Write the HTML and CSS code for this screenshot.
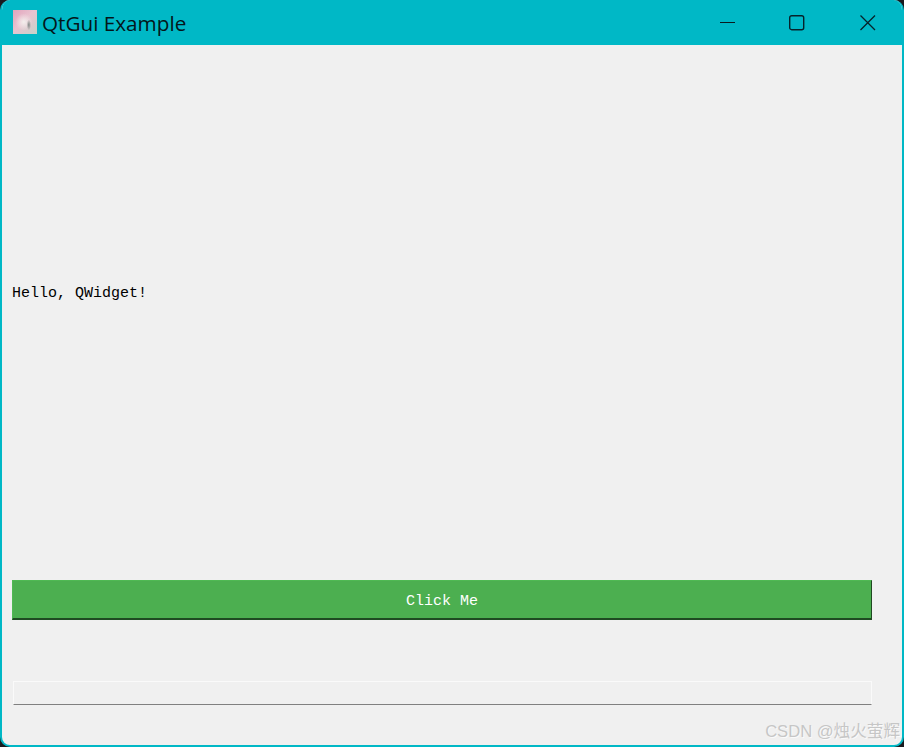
FILE: index.html
```html
<!DOCTYPE html>
<html lang="en">

<head>
  <meta charset="UTF-8">
  <meta name="viewport" content="width=device-width, initial-scale=1.0">
  <title>QtGui Example</title>
  <link rel="stylesheet" href="styles.css">
</head>

<body>
  <div class="window">
    <div class="titlebar">
      <div class="app-icon"></div>
      <span class="title">QtGui Example</span>
      <div class="controls">
        <svg class="ctl ctl-min" width="16" height="16" viewBox="0 0 16 16">
          <path d="M0 7.5H15" stroke="#0a1a1e" stroke-width="1" fill="none" />
        </svg>
        <svg class="ctl ctl-max" width="16" height="16" viewBox="0 0 16 16">
          <rect x="0.7" y="0.7" width="14" height="14" rx="2" stroke="#06222a" stroke-width="1.4" fill="none" />
        </svg>
        <svg class="ctl ctl-close" width="16" height="16" viewBox="0 0 16 16">
          <path d="M0.5 0.5L15 15M15 0.5L0.5 15" stroke="#06222a" stroke-width="1.3" fill="none" />
        </svg>
      </div>
    </div>

    <div class="content">
      <div class="label-area">
        <span class="hello">Hello, QWidget!</span>
      </div>
      <button class="click-btn">Click Me</button>
      <div class="progress"></div>
    </div>

    <div class="watermark">CSDN @烛火萤辉</div>
  </div>
</body>

</html>
```

FILE: styles.css
```css
html,
body {
  margin: 0;
  height: 100%;
  background-color: #1a1a1e;
}

.window {
  position: relative;
  box-sizing: border-box;
  width: 904px;
  height: 747px;
  display: flex;
  flex-direction: column;
  background-color: #f0f0f0;
  border: 2px solid #00b8c6;
  border-top: none;
  border-radius: 10px;
  overflow: hidden;
}

.titlebar {
  height: 45px;
  flex: none;
  display: flex;
  align-items: center;
  background-color: #00b8c6;
  padding-left: 11px;
}

.app-icon {
  width: 24px;
  height: 24px;
  margin-top: -2px;
  background:
    radial-gradient(ellipse 9% 22% at 66% 62%, #7f8583 0, rgba(127, 133, 131, 0) 100%),
    radial-gradient(circle at 45% 50%, #f3efed 0, rgba(243, 239, 237, 0) 48%),
    linear-gradient(135deg, #e2a3bc 0%, #e9c3d0 45%, #c6d3c9 100%);
}

.title {
  margin-left: 5px;
  font-family: "Open Sans", sans-serif;
  font-size: 20.7px;
  color: #04161a;
}

.controls {
  margin-left: auto;
  display: flex;
  align-items: center;
  padding-right: 26px;
}

.ctl-max {
  margin-left: 53px;
}

.ctl-close {
  margin-left: 55px;
}

.content {
  flex: 1;
  display: flex;
  flex-direction: column;
  padding: 0 30px 40px 10px;
}

.label-area {
  flex: 1;
  display: flex;
  align-items: center;
  padding-top: 2px;
  margin-bottom: 40px;
}

.hello {
  font-family: "Liberation Mono", monospace;
  font-size: 15px;
  color: #000;
}

.click-btn {
  box-sizing: border-box;
  height: 40px;
  width: 100%;
  padding: 3px 0 0;
  background-color: #4caf50;
  color: #fff;
  font-family: "Liberation Mono", monospace;
  font-size: 15px;
  border: 1px solid #4fb953;
  border-right: 1px solid #1f4a22;
  border-bottom: 2px solid #1f4a22;
}

.progress {
  box-sizing: border-box;
  height: 24px;
  margin-top: 61px;
  margin-left: 1px;
  background-color: #f0f0f0;
  border: 1px solid #fafafa;
  border-bottom: 1px solid #808080;
}

.watermark {
  position: absolute;
  right: 2px;
  bottom: 3px;
  font-family: "Liberation Sans", "Noto Sans CJK SC", sans-serif;
  font-size: 16.6px;
  color: #c6c6c6;
  text-shadow: 1px 1px 0 #fafafa;
}
```
